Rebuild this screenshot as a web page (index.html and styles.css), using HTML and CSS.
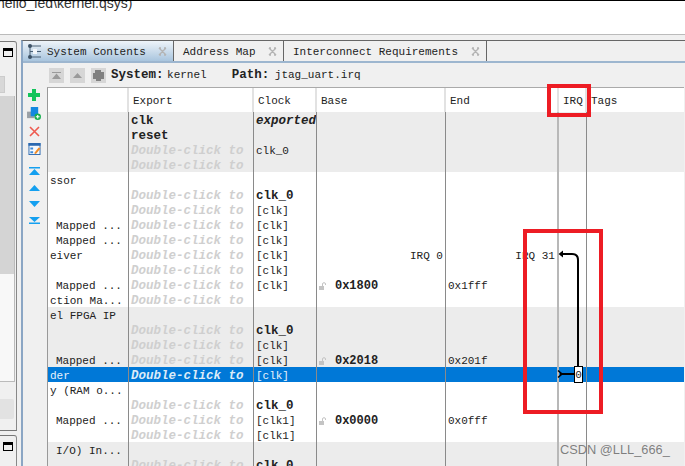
FILE: index.html
```html
<!DOCTYPE html>
<html lang="en">
<head>
    <meta charset="UTF-8">
    <title>kernel.qsys</title>
    <link rel="stylesheet" href="styles.css">
</head>
<body>
    <div class="page">
        <div class="title"><div class="title-text">hello_led\kernel.qsys)</div></div>
        <div class="workspace">
            <div class="side">
                <div class="side-panel side-top">
                    <div class="side-head"><span class="max-icon"></span></div>
                    <div class="side-btn"></div>
                    <div class="side-list"><div class="side-thumb"></div></div>
                    <div class="side-wide"></div>
                </div>
                <div class="side-panel side-bottom">
                    <div class="side-head"><span class="max-icon"></span></div>
                </div>
            </div>
            <div class="main">
                <div class="tabs">
                    <div class="tab tab-active">
                        <svg class="tab-icon" width="15" height="15" viewBox="0 0 15 15">
                            <path d="M3 2V13M3 2H14M3 7.5H14M3 13H14" stroke="#4a6075" stroke-width="1" fill="none"/>
                            <circle cx="3" cy="2" r="2" fill="#3d5266"/>
                            <circle cx="3" cy="13" r="2" fill="#3d5266"/>
                            <rect x="6" y="5" width="4" height="5" fill="#f4f7fa"/>
                        </svg>
                        <span class="tab-name">System Contents</span>
                        <svg class="tab-close" width="9" height="9" viewBox="0 0 9 9"><path d="M1 1L8 8M8 1L1 8M1 1H3M6 1H8M1 8H3M6 8H8" stroke="#b4b4b4" stroke-width="1.4" fill="none"/></svg>
                    </div>
                    <div class="tab tab-address">
                        <span class="tab-name">Address Map</span>
                        <svg class="tab-close" width="9" height="9" viewBox="0 0 9 9"><path d="M1 1L8 8M8 1L1 8M1 1H3M6 1H8M1 8H3M6 8H8" stroke="#b4b4b4" stroke-width="1.4" fill="none"/></svg>
                    </div>
                    <div class="tab tab-inter">
                        <span class="tab-name">Interconnect Requirements</span>
                        <svg class="tab-close" width="9" height="9" viewBox="0 0 9 9"><path d="M1 1L8 8M8 1L1 8M1 1H3M6 1H8M1 8H3M6 8H8" stroke="#b4b4b4" stroke-width="1.4" fill="none"/></svg>
                    </div>
                </div>
                <div class="toolbar">
                    <span class="tool-box"><svg width="9" height="7" viewBox="0 0 9 7"><path d="M0 0H9V1H0ZM4.5 1.5L9 7H0Z" fill="#9a9a9a"/></svg></span>
                    <span class="tool-box"><svg width="9" height="5" viewBox="0 0 9 5"><path d="M4.5 0L9 5H0Z" fill="#9a9a9a"/></svg></span>
                    <span class="tool-box"><svg width="13" height="13" viewBox="0 0 13 13"><path d="M3 1H9V3H12V10H9V12H4V10H1V4H3Z" fill="#808080"/></svg></span>
                    <span class="crumb"><b>System:</b> kernel</span>
                    <span class="crumb crumb-path"><b>Path:</b> jtag_uart.irq</span>
                </div>
                <div class="content">
                    <div class="tools">
                        <svg width="12" height="12" viewBox="0 0 12 12"><path d="M4 0H8V4H12V8H8V12H4V8H0V4H4Z" fill="#12c45a"/></svg>
                        <svg width="14" height="13" viewBox="0 0 15 14">
                            <rect x="0" y="5" width="8" height="7" fill="#9aa0a6"/>
                            <rect x="4" y="0" width="8" height="10" fill="#1488e0"/>
                            <circle cx="11.5" cy="10.5" r="3.5" fill="#18b050"/>
                            <path d="M11.5 8.5V12.5M9.5 10.5H13.5" stroke="#fff" stroke-width="1.2"/>
                        </svg>
                        <svg width="11" height="11" viewBox="0 0 11 11"><path d="M1 1L10 10M10 1L1 10" stroke="#ee5a50" stroke-width="1.6"/></svg>
                        <svg width="13" height="12" viewBox="0 0 13 13">
                            <rect x="0.5" y="0.5" width="12" height="12" fill="#f4f8fc" stroke="#2a68b0"/>
                            <rect x="0" y="0" width="13" height="3" fill="#2a68b0"/>
                            <path d="M2 5H5V7H2ZM2 9H5V11H2Z" fill="#3b88d8"/>
                            <path d="M6 11L11 5L13 6L8 12Z" fill="#f08a24"/>
                        </svg>
                        <svg class="arrow-first" width="11" height="8" viewBox="0 0 11 8"><path d="M0 0H11V1.4H0ZM5.5 2L11 8H0Z" fill="#14a0f0"/></svg>
                        <svg class="arrow" width="11" height="6" viewBox="0 0 11 6"><path d="M5.5 0L11 6H0Z" fill="#14a0f0"/></svg>
                        <svg class="arrow" width="11" height="6" viewBox="0 0 11 6"><path d="M0 0H11L5.5 6Z" fill="#14a0f0"/></svg>
                        <svg class="arrow" width="11" height="7" viewBox="0 0 11 7"><path d="M0 0H11L5.5 5ZM0 5.6H11V7H0Z" fill="#14a0f0"/></svg>
                    </div>
                    <table class="grid">
                        <colgroup>
                            <col class="col-name"><col class="col-export"><col class="col-clock"><col class="col-base"><col class="col-end"><col class="col-irq"><col>
                        </colgroup>
                        <thead>
                            <tr><th></th><th>Export</th><th>Clock</th><th>Base</th><th>End</th><th>IRQ</th><th>Tags</th></tr>
                        </thead>
                        <tbody>
                            <tr class="shade"><td></td><td><b>clk</b></td><td><b><i>exported</i></b></td><td></td><td></td><td></td><td></td></tr>
                            <tr class="shade"><td></td><td><b>reset</b></td><td></td><td></td><td></td><td></td><td></td></tr>
                            <tr class="shade"><td></td><td class="hint">Double-click to</td><td>clk_0</td><td></td><td></td><td></td><td></td></tr>
                            <tr class="shade"><td></td><td class="hint">Double-click to</td><td></td><td></td><td></td><td></td><td></td></tr>
                            <tr><td>ssor</td><td></td><td></td><td></td><td></td><td></td><td></td></tr>
                            <tr><td></td><td class="hint">Double-click to</td><td><b>clk_0</b></td><td></td><td></td><td></td><td></td></tr>
                            <tr><td></td><td class="hint">Double-click to</td><td>[clk]</td><td></td><td></td><td></td><td></td></tr>
                            <tr><td class="far">Mapped ...</td><td class="hint">Double-click to</td><td>[clk]</td><td></td><td></td><td></td><td></td></tr>
                            <tr><td class="far">Mapped ...</td><td class="hint">Double-click to</td><td>[clk]</td><td></td><td></td><td></td><td></td></tr>
                            <tr><td>eiver</td><td class="hint">Double-click to</td><td>[clk]</td><td class="right">IRQ 0</td><td class="right">IRQ 31</td><td></td><td></td></tr>
                            <tr><td></td><td class="hint">Double-click to</td><td>[clk]</td><td></td><td></td><td></td><td></td></tr>
                            <tr><td class="far">Mapped ...</td><td class="hint">Double-click to</td><td>[clk]</td><td class="addr"><svg class="lock" width="7" height="8" viewBox="0 0 7 8"><path d="M0 4H5V8H0Z" fill="#c4c4c4"/><path d="M3.5 4V2Q3.5 .7 5 .7Q6.5 .7 6.5 2V3" fill="none" stroke="#c4c4c4"/></svg><b>0x1800</b></td><td>0x1fff</td><td></td><td></td></tr>
                            <tr><td>ction Ma...</td><td class="hint">Double-click to</td><td></td><td></td><td></td><td></td><td></td></tr>
                            <tr class="shade"><td>el FPGA IP</td><td></td><td></td><td></td><td></td><td></td><td></td></tr>
                            <tr class="shade"><td></td><td class="hint">Double-click to</td><td><b>clk_0</b></td><td></td><td></td><td></td><td></td></tr>
                            <tr class="shade"><td></td><td class="hint">Double-click to</td><td>[clk]</td><td></td><td></td><td></td><td></td></tr>
                            <tr class="shade"><td class="far">Mapped ...</td><td class="hint">Double-click to</td><td>[clk]</td><td class="addr"><svg class="lock" width="7" height="8" viewBox="0 0 7 8"><path d="M0 4H5V8H0Z" fill="#c4c4c4"/><path d="M3.5 4V2Q3.5 .7 5 .7Q6.5 .7 6.5 2V3" fill="none" stroke="#c4c4c4"/></svg><b>0x2018</b></td><td>0x201f</td><td></td><td></td></tr>
                            <tr class="picked"><td>der</td><td class="hint">Double-click to</td><td>[clk]</td><td></td><td></td><td></td><td></td></tr>
                            <tr><td>y (RAM o...</td><td></td><td></td><td></td><td></td><td></td><td></td></tr>
                            <tr><td></td><td class="hint">Double-click to</td><td><b>clk_0</b></td><td></td><td></td><td></td><td></td></tr>
                            <tr><td class="far">Mapped ...</td><td class="hint">Double-click to</td><td>[clk1]</td><td class="addr"><svg class="lock" width="7" height="8" viewBox="0 0 7 8"><path d="M0 4H5V8H0Z" fill="#c4c4c4"/><path d="M3.5 4V2Q3.5 .7 5 .7Q6.5 .7 6.5 2V3" fill="none" stroke="#c4c4c4"/></svg><b>0x0000</b></td><td>0x0fff</td><td></td><td></td></tr>
                            <tr><td></td><td class="hint">Double-click to</td><td>[clk1]</td><td></td><td></td><td></td><td></td></tr>
                            <tr class="shade"><td class="far">I/O) In...</td><td></td><td></td><td></td><td></td><td></td><td></td></tr>
                            <tr class="shade"><td></td><td class="hint">Double-click to</td><td><b>clk_0</b></td><td></td><td></td><td></td><td></td></tr>
                        </tbody>
                    </table>
                </div>
            </div>
        </div>
        <svg class="marks" width="685" height="466" viewBox="0 0 685 466">
            <!-- irq wires -->
            <path d="M561 254H572Q578 254 578 260V367" fill="none" stroke="#000" stroke-width="2"/>
            <path d="M558.5 254L563 250.5V257.5Z" fill="#000"/>
            <path d="M560 374H574" fill="none" stroke="#000" stroke-width="2"/>
            <path d="M558 370.5L562 374L558 377.5" fill="none" stroke="#000" stroke-width="1.6"/>
            <rect x="574.5" y="366.5" width="8" height="16" fill="#fff" stroke="#000"/>
            <text x="578.5" y="378" class="irq-num">0</text>
            <!-- red notes -->
            <rect x="549" y="86" width="40" height="29" fill="none" stroke="#ed1c24" stroke-width="4"/>
            <rect x="525" y="231" width="76" height="181" fill="none" stroke="#ed1c24" stroke-width="4"/>
        </svg>
        <div class="watermark">CSDN @LLL_666_</div>
    </div>
</body>
</html>
```
FILE: styles.css
```css
html, body {
    margin: 0;
    padding: 0;
    height: 466px;
    overflow: hidden;
}
body {
    background-color: #f0f0f0;
    font-family: "Liberation Mono", monospace;
    font-size: 11px;
    color: #222;
}
.page {
    position: relative;
    width: 685px;
    height: 466px;
    overflow: hidden;
}
.title {
    height: 33px;
    border-top: 1px solid #000;
    background-color: #fff;
    overflow: hidden;
}
.title-text {
    margin: -6px 0 0 -3px;
    font-family: "Liberation Sans", sans-serif;
    font-size: 14px;
    line-height: 16px;
    color: #333;
    white-space: nowrap;
}
.workspace {
    display: flex;
    height: 431px;
    border-top: 1px solid #bbb;
}

/* left panels */
.side {
    width: 17px;
    margin-top: 6px;
    display: flex;
    flex-direction: column;
    gap: 4px;
}
.side-panel {
    border: 1px solid #777;
    border-left: none;
    border-right-color: #888;
    border-radius: 0 3px 0 0;
    background-color: #f0f0f0;
}
.side-top {
    height: 388px;
}
.side-bottom {
    flex: 1;
    border-bottom: none;
}
.side-head {
    height: 20px;
    display: flex;
    align-items: center;
    padding-left: 3px;
}
.max-icon {
    box-sizing: border-box;
    width: 10px;
    height: 9px;
    border: 1px solid #000;
    border-top-width: 3px;
}
.side-btn {
    width: 4px;
    height: 15px;
    margin-top: 14px;
    background-color: #d8d8d8;
    border: 1px solid #ccc;
    border-left: none;
}
.side-list {
    box-sizing: border-box;
    width: 15px;
    height: 286px;
    margin-top: 3px;
    background-color: #f8f8f8;
    border-right: 1px solid #bbb;
    border-bottom: 1px solid #bbb;
}
.side-thumb {
    height: 178px;
    background-color: #d4d4d4;
}
.side-wide {
    width: 14px;
    height: 20px;
    margin-top: 17px;
    background-color: #e2e2e2;
    border-radius: 0 2px 2px 0;
}

/* main panel */
.main {
    width: 664px;
    margin-left: 4px;
    margin-top: 5px;
    border-left: 2px solid #8ba6c4;
    border-top: 1px solid #666;
    overflow: hidden;
}
.tabs {
    display: flex;
    height: 20px;
    border-bottom: 2px solid #9db6cf;
}
.tab {
    box-sizing: border-box;
    display: flex;
    align-items: center;
    height: 20px;
    padding-top: 1px;
    border-right: 1px solid #666;
}
.tab-name {
    white-space: nowrap;
}
.tab-active {
    width: 151px;
    background: linear-gradient(#eef4f9, #a9c5de);
    padding-left: 4px;
}
.tab-icon {
    margin-right: 5px;
}
.tab-address {
    width: 110px;
    padding-left: 9px;
}
.tab-inter {
    width: 203px;
    padding-left: 9px;
}
.tab-close {
    margin-left: auto;
    margin-right: 6px;
}
.toolbar {
    display: flex;
    align-items: center;
    height: 24px;
    padding-left: 26px;
}
.tool-box {
    display: flex;
    align-items: center;
    justify-content: center;
    width: 15px;
    height: 15px;
    margin-right: 6px;
    background-color: #d6d6d6;
}
.crumb {
    margin-left: -1px;
    white-space: nowrap;
}
.crumb b {
    font-size: 12.5px;
    margin-right: -3px;
}
.crumb-path {
    margin-left: 25px;
}
.crumb-path b {
    margin-right: -1px;
}
.content {
    display: flex;
}
.tools {
    box-sizing: border-box;
    width: 25px;
    flex-shrink: 0;
    display: flex;
    flex-direction: column;
    align-items: center;
    gap: 6px;
    padding-top: 2px;
    padding-right: 2px;
}
.arrow-first {
    margin-top: 6px;
}
.arrow {
    margin-top: 4px;
}

/* component table */
.grid {
    table-layout: fixed;
    width: 637px;
    border-collapse: separate;
    border-spacing: 0;
    border-top: 1px solid #aaa;
    border-left: 1px solid #999;
    background-color: #fff;
    margin-left: -1px;
}
.col-name { width: 81px; }
.col-export { width: 125px; }
.col-clock { width: 63px; }
.col-base { width: 129px; }
.col-end { width: 113px; }
.col-irq { width: 28px; }
.grid th {
    box-sizing: border-box;
    height: 24px;
    padding: 2px 0 0 4px;
    font-weight: normal;
    text-align: left;
    border-right: 2px solid #e2e2e2;
}
.grid th:last-child {
    border-right: none;
}
.grid td {
    box-sizing: border-box;
    height: 15px;
    padding: 3px 0 0 2px;
    line-height: 12px;
    white-space: nowrap;
    overflow: hidden;
    border-right: 1px solid #8a8a8a;
}
.grid td:nth-child(5) {
    border-right: 2px solid #b8b8b8;
}
.grid td:last-child {
    border-right: none;
}
.grid td b {
    font-size: 12.5px;
}
.grid td.far {
    padding-left: 8px;
}
.grid td.right {
    text-align: right;
    padding-right: 2px;
}
.grid td.addr b {
    font-size: 12px;
}
.lock {
    margin-right: 9px;
    vertical-align: -1px;
}
.shade td {
    background-color: #ececec;
}
.grid td.hint {
    font-size: 12.5px;
    font-style: italic;
    font-weight: bold;
    color: #cfcfcf;
}
.picked td {
    background-color: #0078d7;
    color: #e8f2fb;
}
.grid .picked td.hint {
    color: #dcebf8;
}

/* over everything */
.marks {
    position: absolute;
    left: 0;
    top: 0;
}
.irq-num {
    font-family: "Liberation Mono", monospace;
    font-size: 11px;
    fill: #222;
    text-anchor: middle;
}
.watermark {
    position: absolute;
    left: 560px;
    top: 442px;
    font-family: "Liberation Sans", sans-serif;
    font-size: 12.8px;
    line-height: 16px;
    color: rgba(90, 90, 90, 0.75);
    white-space: nowrap;
}
```
